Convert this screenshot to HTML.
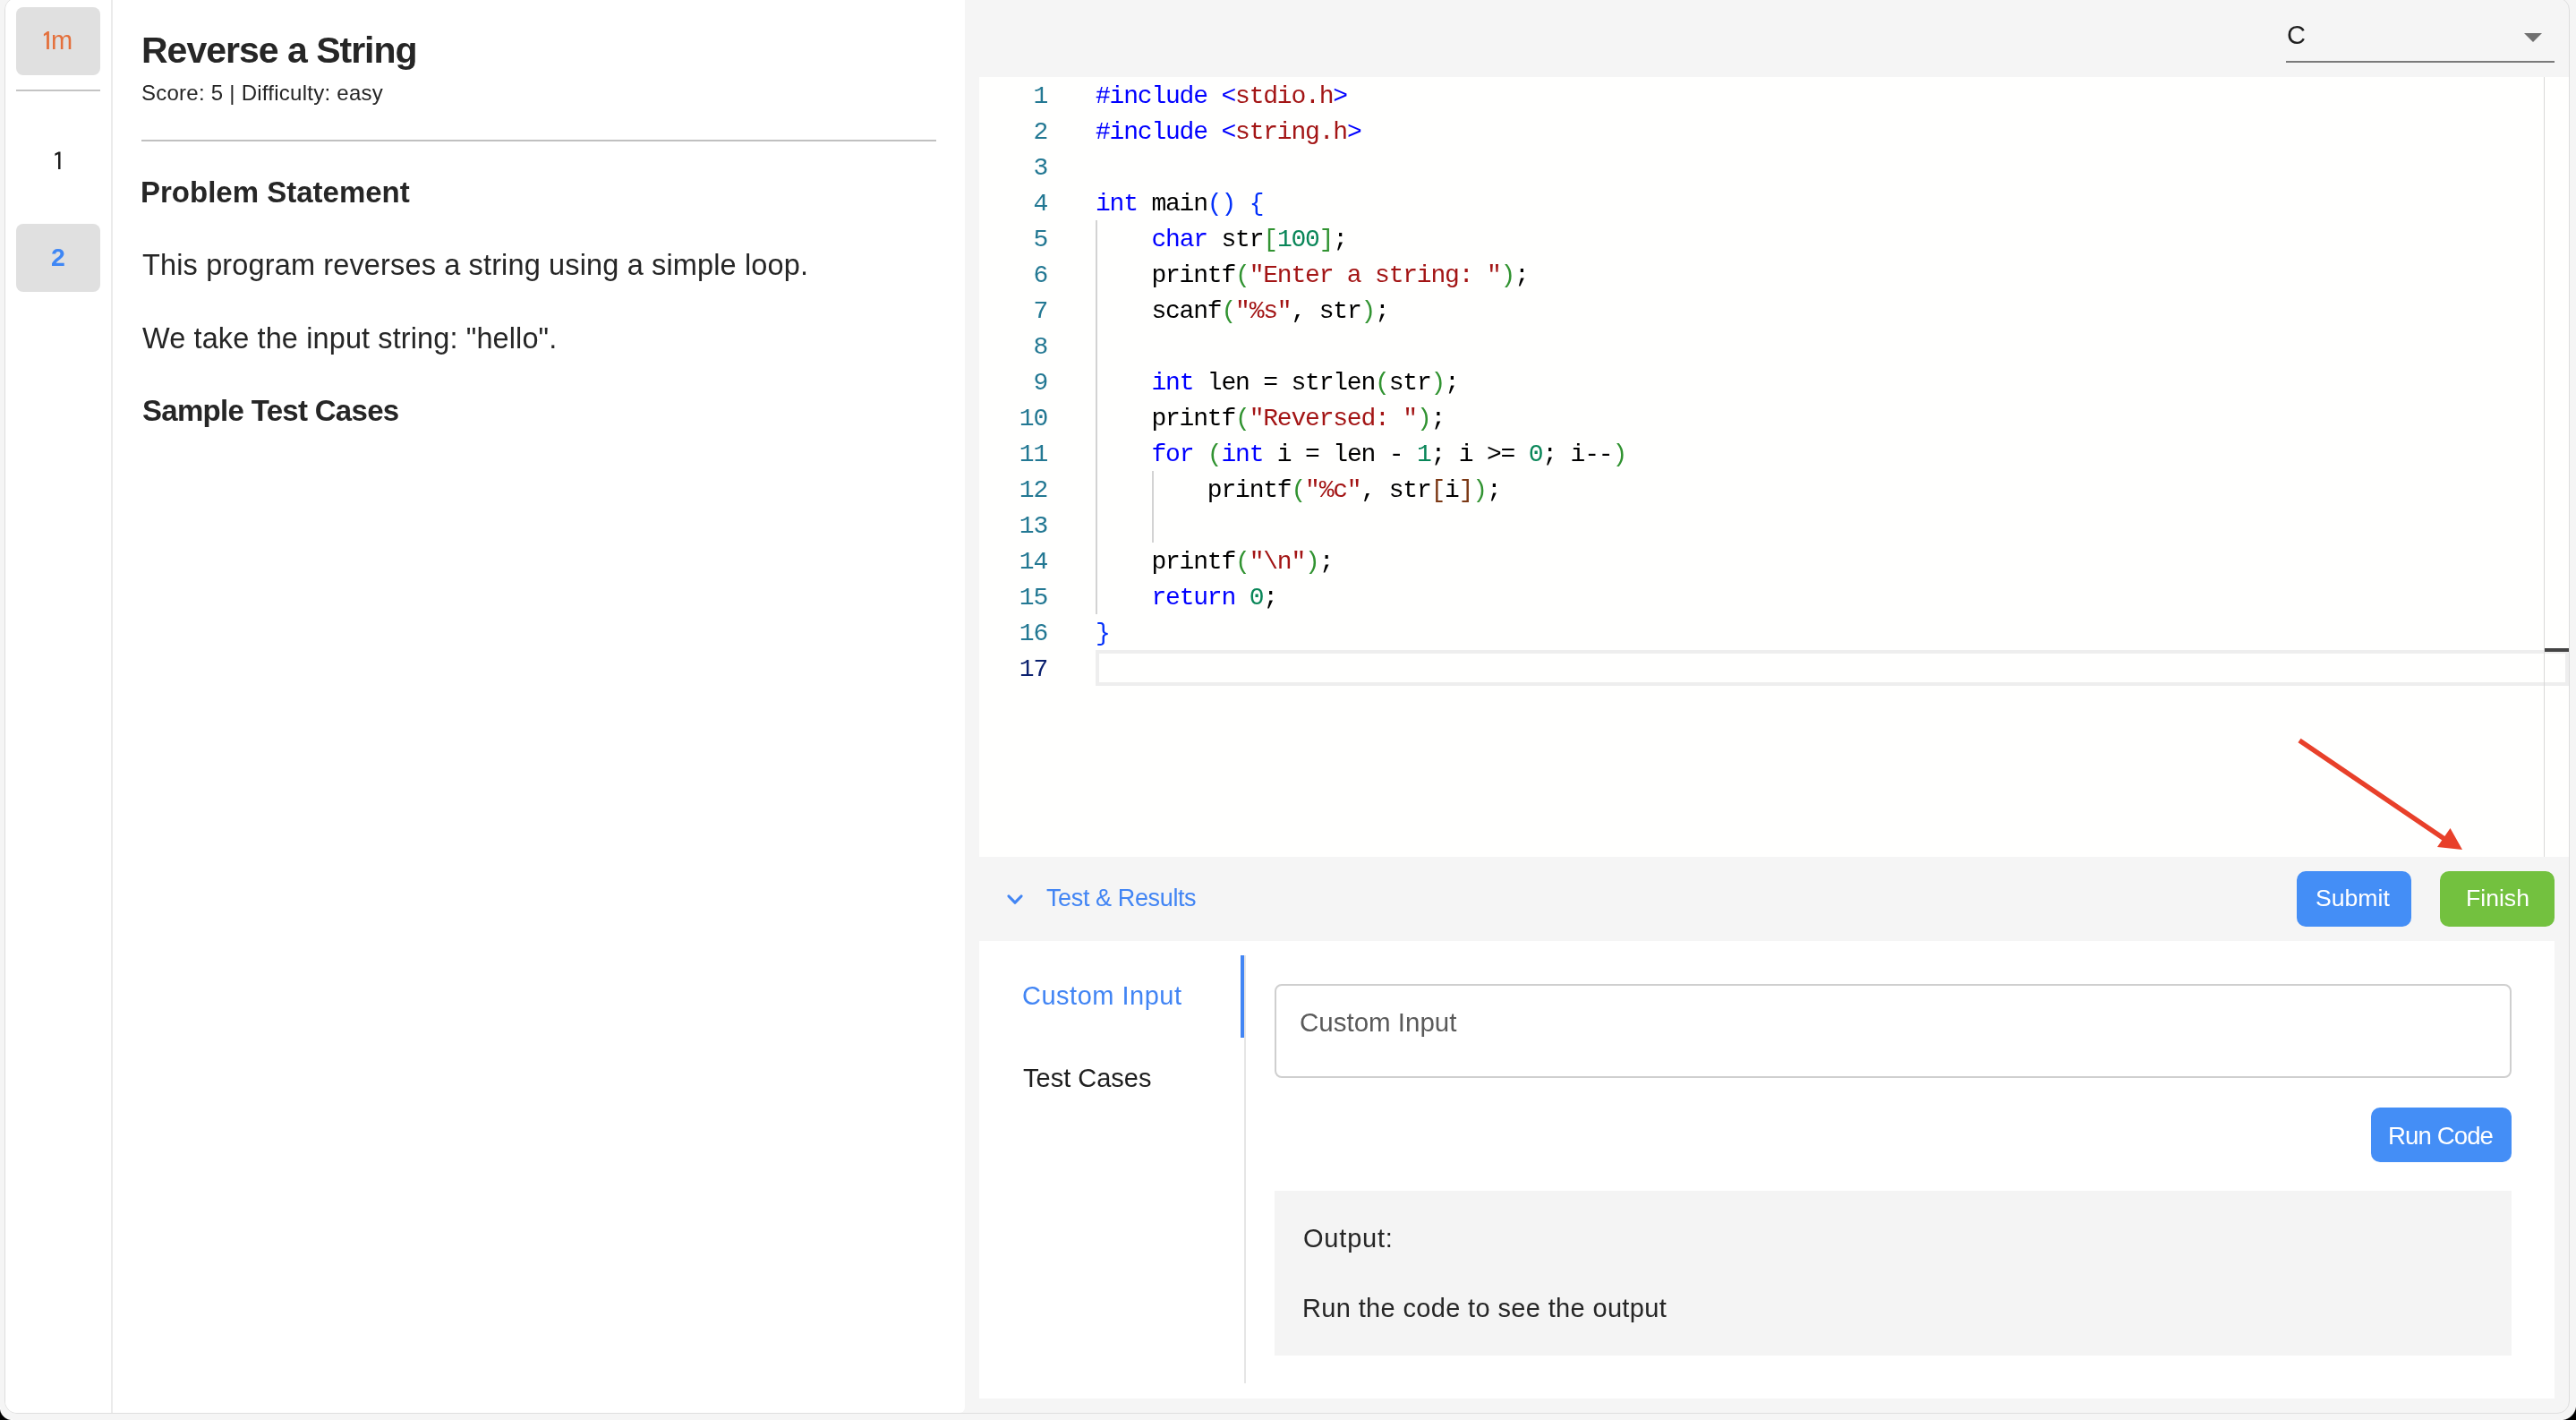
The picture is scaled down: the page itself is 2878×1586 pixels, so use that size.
<!DOCTYPE html>
<html>
<head>
<meta charset="utf-8">
<style>
html,body{margin:0;padding:0;}
body{will-change:transform;width:2878px;height:1586px;overflow:hidden;background:#f5f5f5;position:relative;font-family:"Liberation Sans",sans-serif;color:#212121;}
.a{position:absolute;white-space:pre;line-height:1;}
#frame{position:absolute;left:5px;top:-3px;width:2864px;height:1580px;border:1px solid #dedede;border-radius:14px;overflow:hidden;background:#f5f5f5;}
.blk{position:absolute;}
.ln{position:absolute;left:1100px;padding-top:2px;width:70px;text-align:right;height:40px;line-height:40px;font-family:"Liberation Mono",monospace;font-size:28px;letter-spacing:-1.2px;white-space:pre;}
.cl{position:absolute;left:1224px;padding-top:2px;height:40px;line-height:40px;font-family:"Liberation Mono",monospace;font-size:28px;letter-spacing:-1.2px;white-space:pre;color:#000;}

</style>
</head>
<body>
<div id="frame">
  <!-- left white area: sidebar + problem -->
  <div class="blk" style="left:0;top:0;width:1072px;height:1580px;background:#fff;border-bottom-right-radius:6px;"></div>
  <!-- sidebar separator -->
  <div class="blk" style="left:118px;top:0;width:2px;height:1580px;background:#ebebeb;"></div>
</div>

<!-- sidebar -->
<div class="blk" style="left:18px;top:8px;width:94px;height:76px;background:#e0e0e0;border-radius:8px;"></div>
<svg class="blk" style="left:0;top:0;" width="140" height="200"><path d="M48.9 38 L53 35 L54.9 35 L54.9 55 L52.1 55 L52.1 38.4 L48.9 40.5 Z" fill="#e4703c"/><path d="M61.4 171.4 L65.4 169.4 L67.5 169.4 L67.5 189 L65 189 L65 172.2 L61.4 174 Z" fill="#1f1f1f"/></svg>
<div id="t1m" class="a" style="left:57px;top:31px;font-size:29px;color:#e4703c;">m</div>
<div class="blk" style="left:18px;top:100px;width:94px;height:2px;background:#c4c4c4;"></div>

<div class="blk" style="left:18px;top:250px;width:94px;height:76px;background:#e0e0e0;border-radius:8px;"></div>
<div id="t2" class="a" style="left:57px;top:273px;font-size:28.5px;font-weight:bold;color:#3f87f5;">2</div>

<!-- problem panel -->
<div id="title" class="a" style="left:158px;top:36px;font-size:41px;letter-spacing:-1px;font-weight:bold;color:#262626;">Reverse a String</div>
<div id="sub" class="a" style="left:158px;top:92px;font-size:24px;letter-spacing:0.25px;color:#262626;">Score: 5 | Difficulty: easy</div>
<div class="blk" style="left:158px;top:156px;width:888px;height:2px;background:#c0c0c0;"></div>
<div id="ps" class="a" style="left:157px;top:198px;font-size:33px;font-weight:bold;color:#262626;">Problem Statement</div>
<div id="p1" class="a" style="left:159px;top:280px;font-size:32.5px;letter-spacing:0.14px;color:#262626;">This program reverses a string using a simple loop.</div>
<div id="p2" class="a" style="left:159px;top:362px;font-size:32.5px;letter-spacing:0.11px;color:#262626;">We take the input string: "hello".</div>
<div id="stc" class="a" style="left:159px;top:442px;font-size:33px;letter-spacing:-0.7px;font-weight:bold;color:#262626;">Sample Test Cases</div>

<!-- language select -->
<div id="selC" class="a" style="left:2555px;top:25px;font-size:29px;color:#1f1f1f;">C</div>
<svg class="blk" style="left:2820px;top:37px;" width="20" height="10"><polygon points="0,0 20,0 10,10" fill="#707070"/></svg>
<div class="blk" style="left:2554px;top:68px;width:300px;height:2px;background:#7a7a7a;"></div>

<!-- editor -->
<div class="blk" style="left:1094px;top:86px;width:1776px;height:871px;background:#fffffe;"></div>
<div class="blk" style="left:1224px;top:246px;width:2px;height:440px;background:#d3d3d3;"></div>
<div class="blk" style="left:1287px;top:526px;width:2px;height:80px;background:#d3d3d3;"></div>
<div class="blk" style="left:1224px;top:726px;width:1638px;height:32px;border:4px solid #eeeeee;"></div>
<div class="blk" style="left:2842px;top:86px;width:1px;height:871px;background:#d9d9d9;"></div>
<div class="blk" style="left:2843px;top:724px;width:27px;height:4px;background:#444;"></div>
<div class="ln" style="top:86px;color:#237893">1</div>
<div class="cl" style="top:86px"><span style="color:#0000ff">#include</span> <span style="color:#0000ff">&lt;</span><span style="color:#a31515">stdio.h</span><span style="color:#0000ff">&gt;</span></div>
<div class="ln" style="top:126px;color:#237893">2</div>
<div class="cl" style="top:126px"><span style="color:#0000ff">#include</span> <span style="color:#0000ff">&lt;</span><span style="color:#a31515">string.h</span><span style="color:#0000ff">&gt;</span></div>
<div class="ln" style="top:166px;color:#237893">3</div>
<div class="ln" style="top:206px;color:#237893">4</div>
<div class="cl" style="top:206px"><span style="color:#0000ff">int</span> main<span style="color:#0431fa">()</span> <span style="color:#0431fa">{</span></div>
<div class="ln" style="top:246px;color:#237893">5</div>
<div class="cl" style="top:246px">    <span style="color:#0000ff">char</span> str<span style="color:#319331">[</span><span style="color:#098658">100</span><span style="color:#319331">]</span>;</div>
<div class="ln" style="top:286px;color:#237893">6</div>
<div class="cl" style="top:286px">    printf<span style="color:#319331">(</span><span style="color:#a31515">"Enter a string: "</span><span style="color:#319331">)</span>;</div>
<div class="ln" style="top:326px;color:#237893">7</div>
<div class="cl" style="top:326px">    scanf<span style="color:#319331">(</span><span style="color:#a31515">"%s"</span>, str<span style="color:#319331">)</span>;</div>
<div class="ln" style="top:366px;color:#237893">8</div>
<div class="ln" style="top:406px;color:#237893">9</div>
<div class="cl" style="top:406px">    <span style="color:#0000ff">int</span> len = strlen<span style="color:#319331">(</span>str<span style="color:#319331">)</span>;</div>
<div class="ln" style="top:446px;color:#237893">10</div>
<div class="cl" style="top:446px">    printf<span style="color:#319331">(</span><span style="color:#a31515">"Reversed: "</span><span style="color:#319331">)</span>;</div>
<div class="ln" style="top:486px;color:#237893">11</div>
<div class="cl" style="top:486px">    <span style="color:#0000ff">for</span> <span style="color:#319331">(</span><span style="color:#0000ff">int</span> i = len - <span style="color:#098658">1</span>; i &gt;= <span style="color:#098658">0</span>; i--<span style="color:#319331">)</span></div>
<div class="ln" style="top:526px;color:#237893">12</div>
<div class="cl" style="top:526px">        printf<span style="color:#319331">(</span><span style="color:#a31515">"%c"</span>, str<span style="color:#7b3814">[</span>i<span style="color:#7b3814">]</span><span style="color:#319331">)</span>;</div>
<div class="ln" style="top:566px;color:#237893">13</div>
<div class="ln" style="top:606px;color:#237893">14</div>
<div class="cl" style="top:606px">    printf<span style="color:#319331">(</span><span style="color:#a31515">"\n"</span><span style="color:#319331">)</span>;</div>
<div class="ln" style="top:646px;color:#237893">15</div>
<div class="cl" style="top:646px">    <span style="color:#0000ff">return</span> <span style="color:#098658">0</span>;</div>
<div class="ln" style="top:686px;color:#237893">16</div>
<div class="cl" style="top:686px"><span style="color:#0431fa">}</span></div>
<div class="ln" style="top:726px;color:#0b216f">17</div>

<svg class="blk" style="left:0;top:0;" width="2878" height="1586"><line x1="2569" y1="827" x2="2731" y2="937" stroke="#e8402a" stroke-width="5.5" /><polygon points="2737.5,925 2723,946 2751,949" fill="#e8402a"/></svg>

<!-- test bar -->
<svg class="blk" style="left:1124px;top:997px;" width="20" height="16"><polyline points="3,4 10,11.2 17,4" fill="none" stroke="#4285f4" stroke-width="3.2" stroke-linecap="round" stroke-linejoin="round"/></svg>
<div id="tr" class="a" style="left:1169px;top:990px;font-size:27px;letter-spacing:-0.38px;color:#4285f4;">Test &amp; Results</div>
<div class="blk" style="left:2566px;top:973px;width:128px;height:62px;background:#448ef6;border-radius:10px;"></div>
<div id="sbm" class="a" style="left:2587px;top:989.5px;font-size:26.6px;color:#fff;">Submit</div>
<div class="blk" style="left:2726px;top:973px;width:128px;height:62px;background:#73c13f;border-radius:10px;"></div>
<div id="fin" class="a" style="left:2755px;top:989.5px;font-size:26.6px;color:#fff;">Finish</div>

<!-- bottom panel -->
<div class="blk" style="left:1094px;top:1051px;width:1760px;height:511px;background:#fff;"></div>
<div class="blk" style="left:1390px;top:1067px;width:2px;height:478px;background:#e6e6e6;"></div>
<div class="blk" style="left:1386px;top:1067px;width:4px;height:92px;background:#4285f4;"></div>
<div id="tci" class="a" style="left:1142px;top:1098px;font-size:29px;letter-spacing:0.5px;color:#4285f4;">Custom Input</div>
<div id="ttc" class="a" style="left:1143px;top:1190px;font-size:29px;color:#1f1f1f;">Test Cases</div>
<div class="blk" style="left:1424px;top:1099px;width:1378px;height:101px;border:2px solid #cfcfcf;border-radius:8px;"></div>
<div id="ph" class="a" style="left:1452px;top:1127px;font-size:29.5px;color:#5a5a5a;">Custom Input</div>
<div class="blk" style="left:2649px;top:1237px;width:157px;height:61px;background:#448ef6;border-radius:10px;"></div>
<div id="run" class="a" style="left:2668px;top:1254.5px;font-size:27.6px;letter-spacing:-0.9px;color:#fff;">Run Code</div>
<div class="blk" style="left:1424px;top:1330px;width:1382px;height:184px;background:#f4f4f4;"></div>
<div id="out" class="a" style="left:1456px;top:1369px;font-size:29px;letter-spacing:0.8px;color:#262626;">Output:</div>
<div id="rco" class="a" style="left:1455px;top:1447px;font-size:29px;letter-spacing:0.35px;color:#262626;">Run the code to see the output</div>

<div class="blk" style="left:0;top:1572px;width:14px;height:14px;background:radial-gradient(circle at 100% 0, rgba(0,0,0,0) 13px, #fafafa 13.6px, #000 14.8px);"></div>
<div class="blk" style="left:2861px;top:1569px;width:17px;height:17px;background:radial-gradient(circle at 0 0, rgba(0,0,0,0) 16px, #fafafa 16.6px, #000 17.8px);"></div>
</body>
</html>
